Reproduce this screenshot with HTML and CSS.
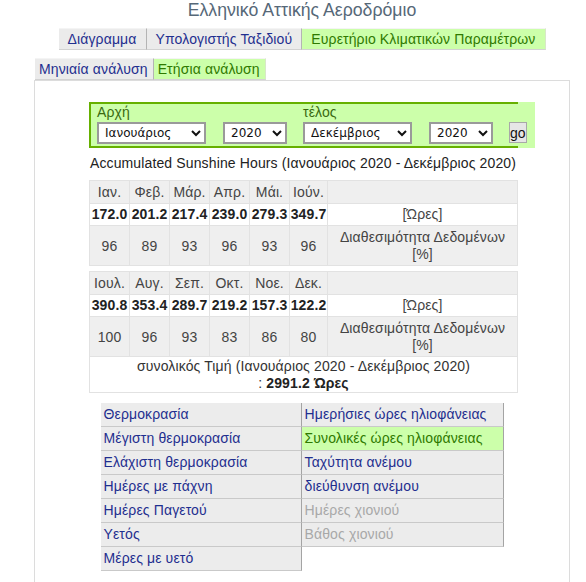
FILE: index.html
```html
<!DOCTYPE html>
<html lang="el">
<head>
<meta charset="utf-8">
<title>Ελληνικό Αττικής Αεροδρόμιο</title>
<link rel="stylesheet" href="styles.css">
</head>
<body>
<div class="page">
  <h1 class="title">Ελληνικό Αττικής Αεροδρόμιο</h1>
  <nav class="tabs">
    <a class="tab">Διάγραμμα</a>
    <a class="tab">Υπολογιστής Ταξιδιού</a>
    <a class="tab active">Ευρετήριο Κλιματικών Παραμέτρων</a>
  </nav>
  <nav class="subtabs">
    <a class="subtab">Μηνιαία ανάλυση</a>
    <a class="subtab active">Ετήσια ανάλυση</a>
  </nav>
  <div class="panel">
    <div class="content">
      <div class="filter">
        <div class="filter-box">
          <div class="group">
            <span class="lbl">Αρχή</span>
            <div class="sel-row">
              <select class="sel month"><option>Ιανουάριος</option></select>
              <select class="sel year"><option>2020</option></select>
            </div>
          </div>
          <div class="group">
            <span class="lbl">τέλος</span>
            <div class="sel-row">
              <select class="sel month"><option>Δεκέμβριος</option></select>
              <select class="sel year"><option>2020</option></select>
            </div>
          </div>
          <button class="go">go</button>
        </div>
      </div>

      <p class="heading">Accumulated Sunshine Hours (Ιανουάριος 2020 - Δεκέμβριος 2020)</p>

      <table class="data">
        <colgroup><col class="c"><col class="c"><col class="c"><col class="c"><col class="c"><col class="c6"><col class="cl"></colgroup>
        <tr class="hdr"><td>Ιαν.</td><td>Φεβ.</td><td>Μάρ.</td><td>Απρ.</td><td>Μάι.</td><td>Ιούν.</td><td></td></tr>
        <tr class="val"><td>172.0</td><td>201.2</td><td>217.4</td><td>239.0</td><td>279.3</td><td>349.7</td><td class="unit">[Ώρες]</td></tr>
        <tr class="avail"><td>96</td><td>89</td><td>93</td><td>96</td><td>93</td><td>96</td><td class="unit">Διαθεσιμότητα Δεδομένων [%]</td></tr>
      </table>

      <table class="data second">
        <colgroup><col class="c"><col class="c"><col class="c"><col class="c"><col class="c"><col class="c6"><col class="cl"></colgroup>
        <tr class="hdr"><td>Ιουλ.</td><td>Αυγ.</td><td>Σεπ.</td><td>Οκτ.</td><td>Νοε.</td><td>Δεκ.</td><td></td></tr>
        <tr class="val"><td>390.8</td><td>353.4</td><td>289.7</td><td>219.2</td><td>157.3</td><td>122.2</td><td class="unit">[Ώρες]</td></tr>
        <tr class="avail"><td>100</td><td>96</td><td>93</td><td>83</td><td>86</td><td>80</td><td class="unit">Διαθεσιμότητα Δεδομένων [%]</td></tr>
        <tr class="total"><td colspan="7">συνολικός Τιμή (Ιανουάριος 2020 - Δεκέμβριος 2020)<br>: <b>2991.2 Ώρες</b></td></tr>
      </table>
    </div>

    <div class="menu">
      <ul class="menu-col">
        <li>Θερμοκρασία</li>
        <li>Μέγιστη θερμοκρασία</li>
        <li>Ελάχιστη θερμοκρασία</li>
        <li>Ημέρες με πάχνη</li>
        <li>Ημέρες Παγετού</li>
        <li>Υετός</li>
        <li>Μέρες με υετό</li>
      </ul>
      <ul class="menu-col">
        <li>Ημερήσιες ώρες ηλιοφάνειας</li>
        <li class="active">Συνολικές ώρες ηλιοφάνειας</li>
        <li>Ταχύτητα ανέμου</li>
        <li>διεύθυνση ανέμου</li>
        <li class="disabled">Ημέρες χιονιού</li>
        <li class="disabled">Βάθος χιονιού</li>
      </ul>
    </div>
  </div>
</div>
</body>
</html>
```

FILE: styles.css
```css
* { box-sizing: border-box; }
html, body { margin: 0; padding: 0; background: #fff; }
body {
  font-family: "Liberation Sans", Arial, sans-serif;
  font-size: 14px;
  letter-spacing: 0.13px;
  color: #222;
}
.page {
  margin-left: 34px;
  width: 536px;
}
.title {
  margin: 0;
  font-size: 17.7px;
  font-weight: normal;
  letter-spacing: 0;
  line-height: 20px;
  color: #566878;
  text-align: center;
}
.tabs {
  display: flex;
  justify-content: center;
  margin-top: 8px;
}
.tab, .subtab {
  display: block;
  background: #ebebeb;
  color: #1f2f8f;
  line-height: 17px;
  border-right: 1px solid #b4b4b4;
  border-bottom: 1px solid #d2d2d2;
  border-top: 1px solid #f4f4f4;
}
.tab { padding: 2px 9px 1px; }
.tab.active, .subtab.active {
  background: #ccffaa;
  color: #2f7a00;
  border-right-color: #d8e8c8;
}
.subtabs {
  display: flex;
  margin-top: 8px;
  padding-left: 1px;
}
.subtab { padding: 2px 5px 1px 4px; }
.panel {
  border: 1px solid #dcdcdc;
  border-bottom: none;
  padding-top: 21px;
  height: 520px;
}
.content {
  margin-left: 54px;
  width: 428px;
}
.filter {
  width: 446px;
  background: #ccffaa;
}
.filter-box {
  display: flex;
  align-items: flex-end;
  width: 429px;
  height: 46px;
  border: 2px solid #66b000;
  border-right: none;
  padding: 0 0 2px 6px;
  white-space: nowrap;
}
.group {
  display: flex;
  flex-direction: column;
  margin-right: 16px;
}
.lbl {
  color: #3a6a10;
  line-height: 16px;
  margin-bottom: 2px;
}
.sel-row {
  display: flex;
  gap: 17px;
}
.sel {
  height: 22px;
  border: 2px solid #9a9a9a;
  border-radius: 0;
  background: #fff;
  font-family: "DejaVu Sans", sans-serif;
  font-size: 12px;
  letter-spacing: 0;
  color: #111;
  padding: 0 2px;
}
.sel.month { width: 109px; }
.sel.year { width: 64px; }
.go {
  height: 21px;
  width: 18px;
  padding: 0;
  margin-bottom: 1px;
  font-family: "Liberation Sans", Arial, sans-serif;
  font-size: 14px;
  letter-spacing: 0;
  color: #111;
  background: #e6e6e6;
  border: 1px solid #a8a8a8;
  border-radius: 0;
}
.heading {
  margin: 7px 0 8px;
  line-height: 17px;
  text-align: center;
  color: #222;
}
.data {
  width: 428px;
  table-layout: fixed;
  border-collapse: collapse;
  border: 1px solid #dcdcdc;
  text-align: center;
}
.data col.c { width: 40px; }
.data col.c6 { width: 38px; }
.data col.cl { width: 190px; }
.data td {
  border: 1px solid #e2e2e2;
  padding: 3px 0 2px;
  line-height: 17px;
  color: #444;
}
.data td.unit { padding-left: 6px; padding-right: 6px; }
.data .hdr td { background: #efefef; }
.data .val td {
  background: #fff;
  font-weight: bold;
  color: #222;
  padding-top: 2px;
  padding-bottom: 2px;
}
.data .val td.unit { font-weight: normal; color: #444; }
.data .avail td { background: #efefef; }
.data .total td {
  background: #fff;
  color: #333;
  padding: 1px 0 0;
}
.data .total b { color: #222; }
.second { margin-top: 5px; }
.menu {
  display: grid;
  grid-template-columns: 201px 202px;
  width: 403px;
  margin: 10px auto 0;
}
.menu-col {
  list-style: none;
  margin: 0;
  padding: 0;
}
.menu-col li {
  background: #ececec;
  color: #1f2f8f;
  line-height: 17px;
  padding: 3px 4px 3px 3px;
  border-bottom: 1px solid #c9c9c9;
  border-right: 1px solid #a4a4a4;
}
.menu-col li.active {
  background: #ccffaa;
  color: #2f7a00;
}
.menu-col li.disabled { color: #a8a8a8; }
```
